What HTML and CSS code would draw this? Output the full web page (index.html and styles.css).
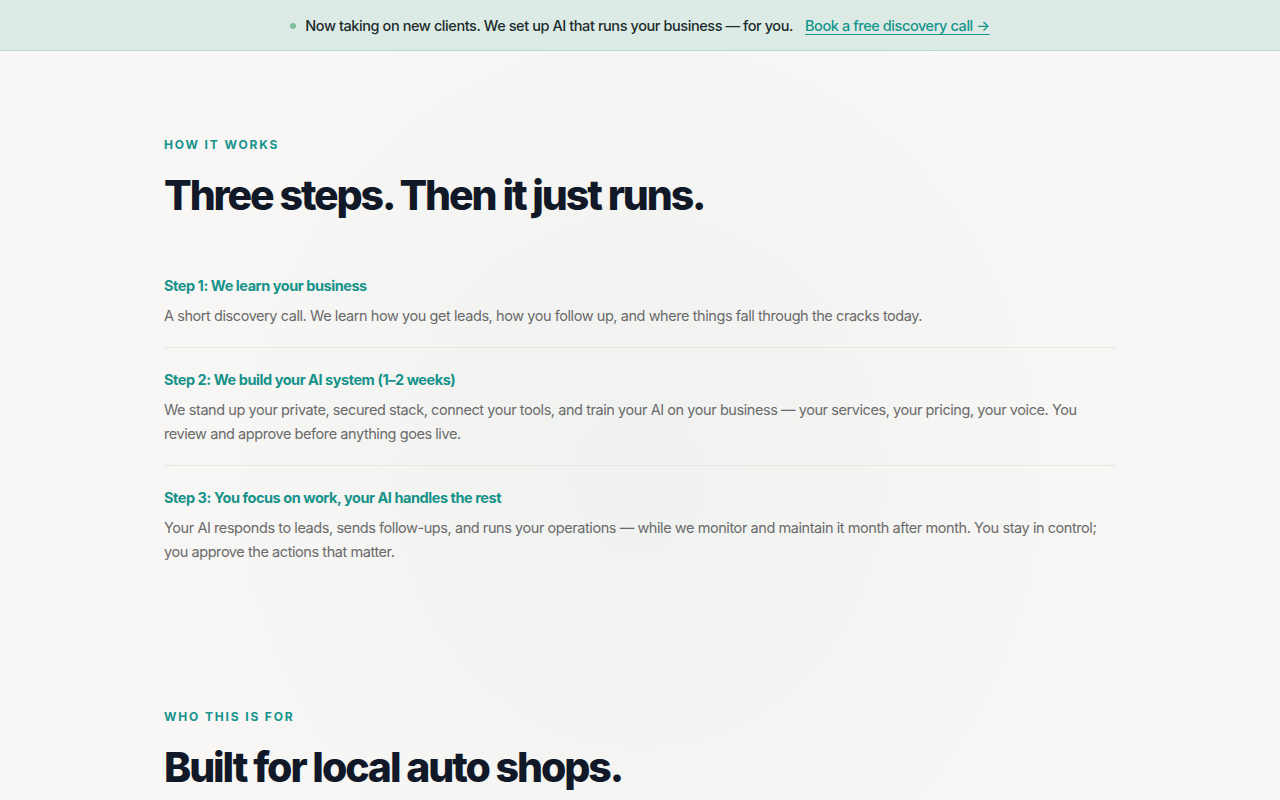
FILE: index.html
```html
<!DOCTYPE html>
<html lang="en">
<head>
<meta charset="utf-8">
<title>How it works</title>
<link rel="stylesheet" href="styles.css">
</head>
<body>
<div class="banner">
  <span class="dot"></span>
  <span class="banner-text">Now taking on new clients. We set up AI that runs your business — for you.</span>
  <a class="banner-link" href="#">Book a free discovery call →</a>
</div>
<main>
  <section class="section how">
    <div class="container">
      <p class="eyebrow">HOW IT WORKS</p>
      <h2 class="title">Three steps. Then it just runs.</h2>
      <div class="steps">
        <div class="step">
          <h3 class="step-title">Step 1: We learn your business</h3>
          <p class="step-body">A short discovery call. We learn how you get leads, how you follow up, and where things fall through the cracks today.</p>
        </div>
        <div class="step">
          <h3 class="step-title">Step 2: We build your AI system (1–2 weeks)</h3>
          <p class="step-body">We stand up your private, secured stack, connect your tools, and train your AI on your business — your services, your pricing, your voice. You review and approve before anything goes live.</p>
        </div>
        <div class="step">
          <h3 class="step-title">Step 3: You focus on work, your AI handles the rest</h3>
          <p class="step-body">Your AI responds to leads, sends follow-ups, and runs your operations — while we monitor and maintain it month after month. You stay in control; you approve the actions that matter.</p>
        </div>
      </div>
    </div>
  </section>
  <section class="section who">
    <div class="container">
      <p class="eyebrow">WHO THIS IS FOR</p>
      <h2 class="title">Built for local auto shops.</h2>
    </div>
  </section>
</main>
</body>
</html>
```
FILE: styles.css
```css
* { box-sizing: border-box; }
html, body { margin: 0; padding: 0; }
body {
  font-family: Inter, "Noto Sans", sans-serif;
  color: #111827;
  background: radial-gradient(ellipse 40% 70% at 50% 60%, #eff2f0 0%, #f5f5f3 60%, #f8f7f5 100%);
  background-color: #f8f7f5;
  min-height: 800px;
}
.banner {
  height: 51px;
  display: flex;
  align-items: center;
  justify-content: center;
  background: linear-gradient(90deg, #dde9e5, #dcebe6 50%, #dde9e5);
  border-bottom: 1px solid #b5ddd3;
  font-size: 14.5px;
  letter-spacing: -0.42px;
  padding-top: 1px;
}
.dot {
  width: 6px; height: 6px; border-radius: 50%;
  background: #7fbf9a;
  margin-right: 9px;
}
.banner-text { color: #1c2b2d; font-weight: 500; }
.banner-link {
  color: #14958b;
  margin-left: 12px;
  font-weight: 500;
  text-decoration: underline;
  text-underline-offset: 3px;
}
.container {
  width: 952px;
  margin: 0 auto;
}
.how { padding-top: 86px; }
.eyebrow {
  margin: 0;
  font-size: 12px;
  font-weight: 700;
  letter-spacing: 1.85px;
  color: #16938b;
  line-height: 15px;
}
.title {
  margin: 17px 0 0;
  font-size: 41px;
  line-height: 52px;
  font-weight: 800;
  letter-spacing: -2.1px;
  color: #111827;
}
.steps { margin-top: 55px; }
.step {
  padding: 0 0 19px;
  border-bottom: 1px solid #e6e6e3;
  margin-bottom: 22px;
}
.step:last-child { border-bottom: none; }
.step-title {
  margin: 0;
  font-size: 14.5px;
  line-height: 20px;
  font-weight: 700;
  letter-spacing: -0.45px;
  color: #15928a;
}
.step-body {
  margin: 8px 0 0;
  font-size: 14.5px;
  line-height: 24px;
  color: #6a6a6a;
  letter-spacing: -0.43px;
}
.who { padding-top: 104px; }
```
